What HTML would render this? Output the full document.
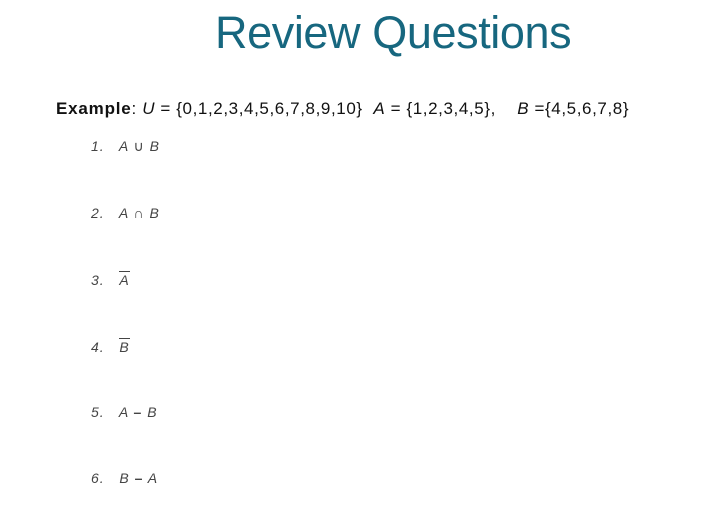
<!DOCTYPE html>
<html><head><style>
body{margin:0;width:710px;height:517px;background:#fff;font-family:"Liberation Sans",sans-serif;position:relative;overflow:hidden}
.t{position:absolute;left:215px;top:7px;font-size:45px;color:#17677f;letter-spacing:-0.4px}
.ex{position:absolute;left:56px;top:99px;font-size:17px;color:#111;letter-spacing:0.6px;white-space:pre}
.i{position:absolute;left:91px;font-size:14px;color:#444;font-style:italic;white-space:pre;letter-spacing:1px}
.o{display:inline-block;border-top:1px solid #444;line-height:14px;padding-top:1px}
</style></head><body>
<div class="t">Review Questions</div>
<div class="ex"><b style="letter-spacing:0.8px">Example</b>: <i>U</i> = {0,1,2,3,4,5,6,7,8,9,10}  <i>A</i> = {1,2,3,4,5},    <i>B</i> ={4,5,6,7,8}</div>
<div class="i" style="top:138px">1.   A <span style="font-style:normal">∪</span> B</div>
<div class="i" style="top:205px">2.   A <span style="font-style:normal">∩</span> B</div>
<div class="i" style="top:271px">3.   <span class="o">A</span></div>
<div class="i" style="top:338px">4.   <span class="o">B</span></div>
<div class="i" style="top:404px">5.   A <b style="font-style:normal">–</b> B</div>
<div class="i" style="top:470px">6.   B <b style="font-style:normal">–</b> A</div>
</body></html>
